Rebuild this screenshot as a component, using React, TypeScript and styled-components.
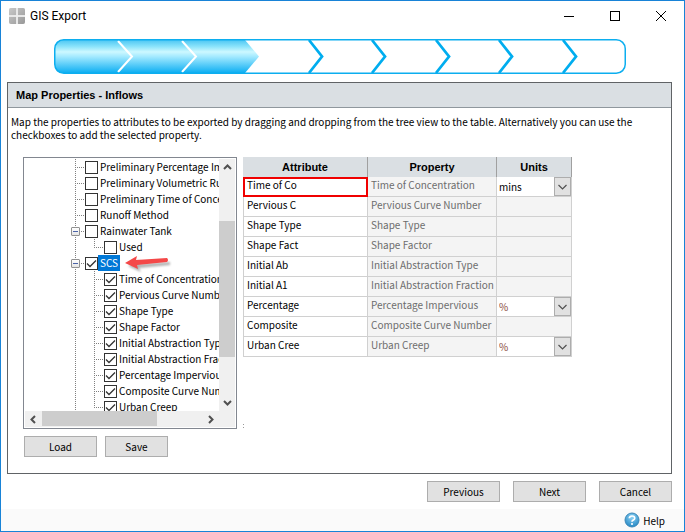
import React from 'react';
import styled, { createGlobalStyle, css } from 'styled-components';

const uiFont = '"Noto Sans CJK SC", "Liberation Sans", sans-serif';
const headingFont = '"Liberation Sans", Arial, sans-serif';

const svgUrl = (body: string, w: number, h: number) =>
  `url("data:image/svg+xml,${encodeURIComponent(
    `<svg xmlns="http://www.w3.org/2000/svg" width="${w}" height="${h}" viewBox="0 0 ${w} ${h}">${body}</svg>`
  )}")`;

const tick = svgUrl('<path d="M1 5.5 L4 8.5 L10 2.5" fill="none" stroke="#333" stroke-width="1.3"/>', 11, 11);
const dropArrow = svgUrl(
  '<rect x="0.5" y="0.5" width="16" height="18" fill="#e1e1e1" stroke="#adadad"/><path d="M4.5 8 L8.5 12 L12.5 8" fill="none" stroke="#505050" stroke-width="1.2"/>',
  17,
  19
);

const GlobalStyle = createGlobalStyle`
  *, *::before, *::after { box-sizing: border-box; }
  body { margin: 0; background: #fff; color: #000; font: 10px/13px ${uiFont}; }
  button, select, input { font: inherit; color: inherit; }
`;

const Window = styled.div`
  display: flex;
  flex-direction: column;
  min-height: 100vh;
  border: 1px solid #1883d7;
  background: #fff;
`;

const TitleBar = styled.header`
  display: flex;
  align-items: center;
  height: 29px;
  padding-left: 8px;
`;

const AppTitle = styled.h1`
  flex: 1;
  margin: 0 0 0 5px;
  font: 400 12px/16px Roboto, sans-serif;
`;

const CaptionButton = styled.button`
  display: grid;
  place-items: center;
  width: 46px;
  height: 28px;
  padding: 0;
  border: 0;
  background: none;
`;

const Progress = styled.div`
  margin: 9px 58px 0 53px;
  svg { display: block; width: 100%; height: auto; }
`;

const Panel = styled.section`
  flex: 1;
  margin: 8px 12px 0 6px;
  border: 1px solid #606366;
`;

const PanelTitle = styled.h2`
  margin: 0;
  padding: 5px 8px;
  border-bottom: 1px solid #8f979d;
  background: #dadfe3;
  font: 700 11px/14px ${headingFont};
`;

const Description = styled.p`
  margin: 0;
  padding: 7px 24px 0 3px;
  line-height: 13px;
`;

const Columns = styled.div`
  display: flex;
  gap: 6px;
  align-items: flex-start;
  margin-top: 16px;
  padding-left: 15px;
`;

const TreeBox = styled.div`
  display: grid;
  grid-template-columns: 1fr 16px;
  grid-template-rows: 252px 16px;
  flex: none;
  width: 214px;
  padding: 1px;
  border: 1px solid #828790;
`;

const TreeView = styled.ul`
  margin: 0;
  padding: 0;
  overflow: hidden;
  list-style: none;
`;

const TreeRow = styled.li`
  position: relative;
  display: flex;
  align-items: center;
  height: 16px;
  padding-left: 50px;
  white-space: nowrap;
`;

const Guide = styled.span`
  flex: none;
  align-self: stretch;
  width: 19px;
  background: repeating-linear-gradient(to bottom, #808080 0 1px, transparent 1px 2px) 0 0 / 1px 100% no-repeat;
`;

const Branch = styled(Guide)<{ $last?: boolean }>`
  width: 10px;
  background:
    repeating-linear-gradient(to bottom, #808080 0 1px, transparent 1px 2px) 0 0 / 1px ${(p) => (p.$last ? '9px' : '100%')} no-repeat,
    repeating-linear-gradient(to right, #808080 0 1px, transparent 1px 2px) 0 8px / 9px 1px no-repeat;
`;

const Expander = styled.button`
  position: absolute;
  left: 46px;
  top: 4px;
  width: 9px;
  height: 9px;
  padding: 0;
  border: 1px solid #919191;
  border-radius: 1px;
  background: linear-gradient(#4b63a7, #4b63a7) center / 5px 1px no-repeat, linear-gradient(#fff, #e4e4e4);
`;

const NodeLabel = styled.label<{ $selected?: boolean }>`
  display: flex;
  align-items: center;
  height: 16px;
  span {
    padding: 0 2px;
    line-height: 16px;
    ${(p) => p.$selected && css`background: #0078d7; color: #fff;`}
  }
`;

const Check = styled.input`
  appearance: none;
  flex: none;
  width: 13px;
  height: 13px;
  margin: 0;
  border: 1px solid #333;
  background: #fff;
  &:checked { background-image: ${tick}; }
`;

const Pointer = styled.svg`
  position: absolute;
  left: 99px;
  top: 0;
  overflow: visible;
`;

const ScrollBar = styled.div<{ $horizontal?: boolean }>`
  display: flex;
  flex-direction: ${(p) => (p.$horizontal ? 'row' : 'column')};
  background: #f0f0f0;
`;

const ScrollArrow = styled.button`
  display: grid;
  place-items: center;
  flex: none;
  width: 17px;
  height: 17px;
  padding: 0;
  border: 0;
  background: none;
`;

const ThumbV = styled.div`
  height: 136px;
  margin: 45px 0 auto;
  background: #cdcdcd;
`;

const ThumbH = styled.div`
  width: 115px;
  height: 15px;
  margin-right: auto;
  background: #cdcdcd;
`;

const Corner = styled.div`
  background: #f0f0f0;
`;

const GridArea = styled.div`
  display: flex;
  flex-direction: column;
  justify-content: space-between;
  align-self: stretch;
`;

const Grip = styled.div`
  width: 1px;
  height: 5px;
  background: repeating-linear-gradient(to bottom, #999 0 1px, transparent 1px 3px);
`;

const Table = styled.table`
  width: 329px;
  table-layout: fixed;
  border-collapse: separate;
  border-spacing: 0;
`;

const HeadCell = styled.th<{ $width: number }>`
  width: ${(p) => p.$width}px;
  height: 20px;
  padding: 0;
  border-right: 1px solid #a0a0a0;
  background: #dadfe3;
  font: 700 11px/14px ${headingFont};
`;

const Cell = styled.td<{ $readOnly?: boolean; $current?: boolean }>`
  height: 20px;
  padding: 0 3px 4px;
  border-right: 1px solid #d0d0d0;
  border-bottom: 1px solid #d0d0d0;
  white-space: nowrap;
  &:first-child { border-left: 1px solid #d0d0d0; }
  ${(p) => p.$readOnly && css`background: #f4f4f4; color: #6d6d6d;`}
  ${(p) => p.$current && css`outline: 2px solid #f00000; outline-offset: -2px;`}
`;

const UnitCell = styled(Cell)`
  padding: 0;
`;

const UnitSelect = styled.select<{ $percent?: boolean }>`
  display: block;
  appearance: none;
  width: 100%;
  height: 19px;
  padding: 0 18px 0 2px;
  border: 0;
  border-radius: 0;
  color: ${(p) => (p.$percent ? '#8a4a3a' : '#000')};
  background: #fff ${dropArrow} right 0 top 0 no-repeat;
`;

const ButtonRow = styled.div<{ $end?: boolean }>`
  display: flex;
  gap: ${(p) => (p.$end ? 13 : 8)}px;
  justify-content: ${(p) => (p.$end ? 'flex-end' : 'flex-start')};
  padding: ${(p) => (p.$end ? '7px 12px 7px' : '7px 16px 15px')};
`;

const PushButton = styled.button<{ $narrow?: boolean }>`
  width: ${(p) => (p.$narrow ? 63 : 73)}px;
  height: 21px;
  padding: 0;
  border: 1px solid #adadad;
  background: #e1e1e1;
`;

const StatusBar = styled.footer`
  display: flex;
  justify-content: flex-end;
  align-items: center;
  height: 22px;
  padding-right: 19px;
  background: #fafafa;
`;

const HelpLink = styled.a`
  display: flex;
  align-items: center;
  gap: 3px;
  color: #000;
  text-decoration: none;
`;

type Node = { text: string; child?: boolean; checked?: boolean; open?: boolean; last?: boolean; selected?: boolean };

const nodes: Node[] = [
  { text: 'Preliminary Percentage Impervious' },
  { text: 'Preliminary Volumetric Runoff' },
  { text: 'Preliminary Time of Concentration' },
  { text: 'Runoff Method' },
  { text: 'Rainwater Tank', open: true },
  { text: 'Used', child: true, last: true },
  { text: 'SCS', open: true, checked: true, selected: true },
  { text: 'Time of Concentration', child: true, checked: true },
  { text: 'Pervious Curve Number', child: true, checked: true },
  { text: 'Shape Type', child: true, checked: true },
  { text: 'Shape Factor', child: true, checked: true },
  { text: 'Initial Abstraction Type', child: true, checked: true },
  { text: 'Initial Abstraction Fraction', child: true, checked: true },
  { text: 'Percentage Impervious', child: true, checked: true },
  { text: 'Composite Curve Number', child: true, checked: true },
  { text: 'Urban Creep', child: true, checked: true, last: true },
];

const rows: [string, string, string?][] = [
  ['Time of Co', 'Time of Concentration', 'mins'],
  ['Pervious C', 'Pervious Curve Number'],
  ['Shape Type', 'Shape Type'],
  ['Shape Fact', 'Shape Factor'],
  ['Initial Ab', 'Initial Abstraction Type'],
  ['Initial A1', 'Initial Abstraction Fraction'],
  ['Percentage', 'Percentage Impervious', '%'],
  ['Composite', 'Composite Curve Number'],
  ['Urban Cree', 'Urban Creep', '%'],
];

const AppIcon = () => (
  <svg width="16" height="16" viewBox="0 0 16 16" aria-hidden="true">
    <defs>
      <linearGradient id="tile" x1="0" y1="0" x2="1" y2="1">
        <stop offset="0" stopColor="#c8c8c8" />
        <stop offset="1" stopColor="#989898" />
      </linearGradient>
    </defs>
    <rect width="16" height="16" rx="2" fill="#dedede" />
    <path d="M2 0 H7 V7 H0 V2 Q0 0 2 0Z M9 0 H14 Q16 0 16 2 V7 H9Z M0 9 H7 V16 H2 Q0 16 0 14Z M9 9 H16 V14 Q16 16 14 16 H9Z" fill="url(#tile)" />
    <path d="M8 0 V16 M0 8 H16" stroke="#f2f2f2" strokeWidth="1" />
  </svg>
);

const doneSteps = [64, 128];
const nextSteps = [254, 317, 381, 444, 508];

const ProgressArt = () => (
  <svg viewBox="0 0 572 35" role="img" aria-label="Step 3 of 9">
    <defs>
      <linearGradient id="fill" x1="0" y1="0" x2="0" y2="1">
        <stop offset="0" stopColor="#4cc6f3" />
        <stop offset="0.2" stopColor="#8ce4fb" />
        <stop offset="0.36" stopColor="#cdf8ff" />
        <stop offset="0.5" stopColor="#a4eaff" />
        <stop offset="1" stopColor="#0caef2" />
      </linearGradient>
    </defs>
    <path d="M9 1 H191 L205 17.5 L191 34 H9 Q1 34 1 26 V9 Q1 1 9 1Z" fill="url(#fill)" />
    {doneSteps.map((x) => (
      <path key={x} d={`M${x} 2 L${x + 14} 17.5 L${x} 33`} fill="none" stroke="#fff" strokeWidth="2" />
    ))}
    {nextSteps.map((x) => (
      <path key={x} d={`M${x + 1} 1 L${x + 14} 17.5 L${x + 1} 34`} fill="none" stroke="#00adef" strokeWidth="2.8" />
    ))}
    <rect x="0.75" y="0.75" width="570.5" height="33.5" rx="9" fill="none" stroke="#0caeef" strokeWidth="1.5" />
  </svg>
);

const arrows = {
  up: 'M1 6 L4.5 2.5 L8 6',
  down: 'M1 3 L4.5 6.5 L8 3',
  left: 'M6 1 L2.5 4.5 L6 8',
  right: 'M3 1 L6.5 4.5 L3 8',
};

const Arrow = ({ dir }: { dir: keyof typeof arrows }) => (
  <ScrollArrow type="button" aria-label={`Scroll ${dir}`}>
    <svg width="9" height="9" viewBox="0 0 9 9">
      <path d={arrows[dir]} fill="none" stroke="#505050" strokeWidth="2" />
    </svg>
  </ScrollArrow>
);

const PointerShadow = styled.path`
  filter: blur(1px);
`;

const RedPointer = () => (
  <Pointer width="48" height="18" viewBox="0 0 48 18" aria-hidden="true">
    <PointerShadow d="M4 11 L16 5 L15 9 L46 7 V10 L15 13 L17 17Z" fill="#666" opacity="0.5" />
    <path d="M1 8 L13 1 L12 5 L43 3 Q45 5 43 7 L13 10 L14 14Z" fill="#f44848" />
  </Pointer>
);

const HelpIcon = () => (
  <svg width="16" height="16" viewBox="0 0 16 16" aria-hidden="true">
    <defs>
      <radialGradient id="ball" cx="0.5" cy="0.3" r="0.7">
        <stop offset="0" stopColor="#8ed3f5" />
        <stop offset="1" stopColor="#2588c4" />
      </radialGradient>
    </defs>
    <circle cx="8" cy="8" r="7" fill="url(#ball)" stroke="#3d88b8" />
    <path d="M5.3 6.3 Q5.5 4 8 4 Q10.7 4 10.7 6.2 Q10.7 7.5 9.2 8.1 Q8 8.6 8 9.8" fill="none" stroke="#fff" strokeWidth="1.7" />
    <circle cx="8" cy="12" r="1.1" fill="#fff" />
  </svg>
);

export default function App() {
  return (
    <>
      <GlobalStyle />
      <Window>
        <TitleBar>
          <AppIcon />
          <AppTitle>GIS Export</AppTitle>
          <CaptionButton type="button" aria-label="Minimize">
            <svg width="10" height="10"><path d="M0 5.5 H10" stroke="#000" /></svg>
          </CaptionButton>
          <CaptionButton type="button" aria-label="Maximize">
            <svg width="10" height="10"><rect x="0.5" y="0.5" width="9" height="9" fill="none" stroke="#000" /></svg>
          </CaptionButton>
          <CaptionButton type="button" aria-label="Close">
            <svg width="10" height="10"><path d="M0 0 L10 10 M10 0 L0 10" stroke="#000" /></svg>
          </CaptionButton>
        </TitleBar>
        <Progress><ProgressArt /></Progress>
        <Panel>
          <PanelTitle>Map Properties - Inflows</PanelTitle>
          <Description>
            Map the properties to attributes to be exported by dragging and dropping from the tree view to the table.
            Alternatively you can use the checkboxes to add the selected property.
          </Description>
          <Columns>
            <TreeBox>
              <TreeView>
                {nodes.map((n) => (
                  <TreeRow key={n.text}>
                    {n.child && <Guide />}
                    <Branch $last={n.last} />
                    {n.open && <Expander type="button" aria-label={`Collapse ${n.text}`} />}
                    <NodeLabel $selected={n.selected}>
                      <Check type="checkbox" defaultChecked={n.checked} />
                      <span>{n.text}</span>
                    </NodeLabel>
                    {n.selected && <RedPointer />}
                  </TreeRow>
                ))}
              </TreeView>
              <ScrollBar>
                <Arrow dir="up" />
                <ThumbV />
                <Arrow dir="down" />
              </ScrollBar>
              <ScrollBar $horizontal>
                <Arrow dir="left" />
                <ThumbH />
                <Arrow dir="right" />
              </ScrollBar>
              <Corner />
            </TreeBox>
            <GridArea>
              <Table>
                <thead>
                  <tr>
                    <HeadCell $width={125}>Attribute</HeadCell>
                    <HeadCell $width={129}>Property</HeadCell>
                    <HeadCell $width={75}>Units</HeadCell>
                  </tr>
                </thead>
                <tbody>
                  {rows.map(([attribute, property, unit], i) => (
                    <tr key={attribute}>
                      <Cell $current={i === 0}>{attribute}</Cell>
                      <Cell $readOnly>{property}</Cell>
                      <UnitCell $readOnly={!unit}>
                        {unit && (
                          <UnitSelect $percent={unit === '%'} aria-label={`Units for ${property}`} defaultValue={unit}>
                            <option>{unit}</option>
                          </UnitSelect>
                        )}
                      </UnitCell>
                    </tr>
                  ))}
                </tbody>
              </Table>
              <Grip />
            </GridArea>
          </Columns>
          <ButtonRow>
            <PushButton type="button">Load</PushButton>
            <PushButton type="button" $narrow>Save</PushButton>
          </ButtonRow>
        </Panel>
        <ButtonRow $end>
          <PushButton type="button">Previous</PushButton>
          <PushButton type="button">Next</PushButton>
          <PushButton type="button">Cancel</PushButton>
        </ButtonRow>
        <StatusBar>
          <HelpLink href="#help"><HelpIcon />Help</HelpLink>
        </StatusBar>
      </Window>
    </>
  );
}
